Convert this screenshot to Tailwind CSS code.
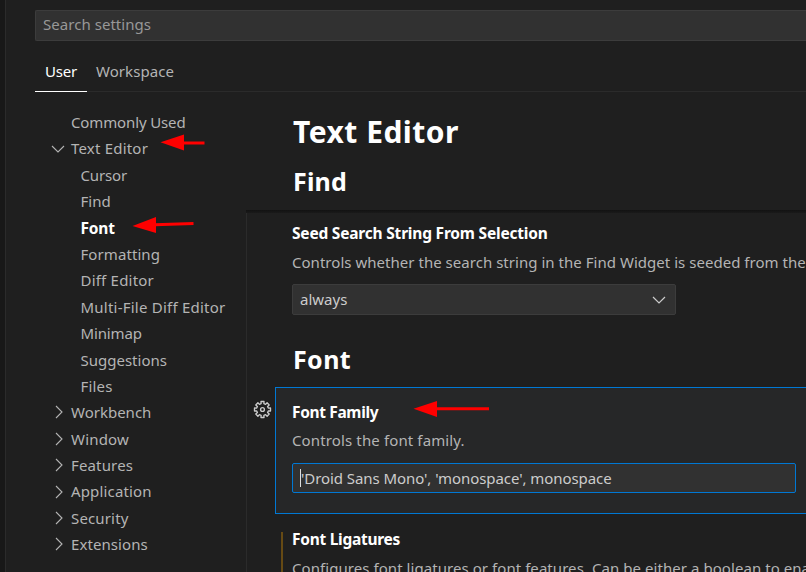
<!DOCTYPE html>
<html lang="en">
<head>
<meta charset="utf-8">
<title>Settings</title>
<script src="https://cdn.jsdelivr.net/npm/@tailwindcss/browser@4"></script>
</head>
<body class="relative flex h-[572px] w-[806px] overflow-hidden bg-[#1f1f1f] font-['Noto_Sans',sans-serif] text-[15px] text-[#b4b4b4] whitespace-nowrap">
<div class="w-[6px] shrink-0 border-r border-[#2b2b2b] bg-[#181818]"></div>
<main class="flex min-w-0 flex-1 flex-col">
  <header class="shrink-0 pl-[29px]">
    <div class="mt-[10px] flex h-[31px] items-center rounded-l-[2px] border border-r-0 border-[#3c3c3c] bg-[#313131] pl-[7px] pb-[2px] text-[#989898] tracking-[0.04px]">Search settings</div>
    <nav class="mt-[11px] flex h-[40px] border-b border-[#2b2b2b]">
      <div class="mb-[-1px] flex w-[52px] items-center justify-center border-b border-white text-white tracking-[-0.2px]">User</div>
      <div class="ml-[9px] flex items-center tracking-[0.06px]">Workspace</div>
    </nav>
  </header>
  <div class="flex min-h-0 flex-1">
    <aside class="flex w-[240px] shrink-0 flex-col pt-[17px] *:flex *:h-[26.4px] *:shrink-0 *:items-center">
      <div class="pl-[65px] tracking-[-0.13px]">Commonly Used</div>
      <div class="gap-[6px] pl-[45px] tracking-[0.2px]"><svg class="mt-[2px] h-[14px] w-[14px]" viewBox="0 0 14 14" fill="none" stroke="#b4b4b4" stroke-width="1.1"><path d="M1 3l6 6 6-6"/></svg>Text Editor</div>
      <div class="pl-[74.5px] tracking-[-0.15px]">Cursor</div>
      <div class="pl-[74.5px]">Find</div>
      <div class="pl-[74.5px] pt-px text-[15.5px] font-bold tracking-[-0.2px] text-white">Font</div>
      <div class="pl-[74.5px] tracking-[0.08px]">Formatting</div>
      <div class="pl-[74.5px] tracking-[0.21px]">Diff Editor</div>
      <div class="pl-[74.5px] tracking-[0.23px]">Multi-File Diff Editor</div>
      <div class="pl-[74.5px] tracking-[-0.15px]">Minimap</div>
      <div class="pl-[74.5px] pt-px">Suggestions</div>
      <div class="pl-[74.5px] tracking-[0.17px]">Files</div>
      <div class="gap-[6px] pl-[45px]"><svg class="h-[14px] w-[14px]" viewBox="0 0 14 14" fill="none" stroke="#b4b4b4" stroke-width="1.1"><path d="M5 1l6 6-6 6"/></svg>Workbench</div>
      <div class="gap-[6px] pl-[45px] tracking-[0.18px]"><svg class="h-[14px] w-[14px]" viewBox="0 0 14 14" fill="none" stroke="#b4b4b4" stroke-width="1.1"><path d="M5 1l6 6-6 6"/></svg>Window</div>
      <div class="gap-[6px] pl-[45px] tracking-[0.15px]"><svg class="h-[14px] w-[14px]" viewBox="0 0 14 14" fill="none" stroke="#b4b4b4" stroke-width="1.1"><path d="M5 1l6 6-6 6"/></svg>Features</div>
      <div class="gap-[6px] pl-[45px] tracking-[0.15px]"><svg class="h-[14px] w-[14px]" viewBox="0 0 14 14" fill="none" stroke="#b4b4b4" stroke-width="1.1"><path d="M5 1l6 6-6 6"/></svg>Application</div>
      <div class="gap-[6px] pl-[45px] tracking-[0.15px]"><svg class="h-[14px] w-[14px]" viewBox="0 0 14 14" fill="none" stroke="#b4b4b4" stroke-width="1.1"><path d="M5 1l6 6-6 6"/></svg>Security</div>
      <div class="gap-[6px] pl-[45px] tracking-[0.08px]"><svg class="h-[14px] w-[14px]" viewBox="0 0 14 14" fill="none" stroke="#b4b4b4" stroke-width="1.1"><path d="M5 1l6 6-6 6"/></svg>Extensions</div>
    </aside>
    <section class="flex min-w-0 flex-1 flex-col overflow-hidden">
      <div class="h-[118px] shrink-0 pl-[47px] font-bold text-white">
        <h1 class="pt-[20px] text-[30px] leading-[40px] tracking-[0.49px]">Text Editor</h1>
        <h2 class="pt-[11px] text-[25px] leading-[36px] tracking-[0.18px]">Find</h2>
      </div>
      <div class="h-[3px] shrink-0 bg-linear-to-b from-[#121212] to-[#1a1a1a]"></div>
      <div class="flex flex-1 flex-col border-l border-[#2b2b2b]">
        <div class="h-[174px] shrink-0 pl-[45px]">
          <h3 class="pt-[10px] text-[15.5px] font-bold leading-[20px] tracking-[-0.2px] text-white">Seed Search String From Selection</h3>
          <p class="mt-[9px] leading-[20px] tracking-[0.03px]">Controls whether the search string in the Find Widget is seeded from the</p>
          <div class="mt-[12px] flex h-[31px] w-[384px] items-center justify-between rounded-[2px] border border-[#3c3c3c] bg-[#313131] pr-[9px] pl-[7px] text-[#cccccc]"><span class="pb-px">always</span><svg class="h-[14px] w-[14px]" viewBox="0 0 14 14" fill="none" stroke="#cccccc" stroke-width="1.2"><path d="M1 4l6 6 6-6"/></svg></div>
          <h2 class="mt-[26px] pl-px text-[25px] font-bold leading-[36px] tracking-[0.39px] text-white">Font</h2>
        </div>
        <div class="flex shrink-0">
          <div class="flex w-[28px] justify-end pr-[3.5px] pt-[13px]">
            <svg class="h-[19px] w-[19px]" viewBox="-9.500 -9.500 19 19" fill="none" stroke="#cccccc" stroke-width="1.35" stroke-linejoin="round"><path d="M-1.400-5.800L-1.500-8H1.500L1.400-5.800L3.100-5.100L4.600-6.700L6.700-4.600L5.100-3.100L5.800-1.400L8-1.500V1.500L5.800 1.400L5.100 3.100L6.700 4.600L4.600 6.700L3.100 5.100L1.400 5.800L1.500 8H-1.500L-1.400 5.800L-3.100 5.100L-4.600 6.700L-6.700 4.600L-5.100 3.100L-5.800 1.400L-8 1.500V-1.500L-5.800-1.400L-5.100-3.100L-6.700-4.600L-4.600-6.700L-3.100-5.100Z"/><circle r="1.900"/></svg>
          </div>
          <div class="h-[127px] flex-1 border border-r-0 border-[#0078d4] bg-[#262728] pl-[16px]">
            <h3 class="pt-[14px] text-[15.5px] font-bold leading-[20px] tracking-[-0.35px] text-white">Font Family</h3>
            <p class="mt-[8px] leading-[20px] tracking-[0.13px]">Controls the font family.</p>
            <div class="mt-[13px] flex h-[30px] w-[504px] items-center rounded-[2px] border border-[#0078d4] bg-[#313131] pl-[7px] text-[#cccccc] tracking-[-0.07px]"><i class="h-[18px] w-px bg-[#dddddd]"></i><span class="pt-px">'Droid Sans Mono', 'monospace', monospace</span></div>
          </div>
        </div>
        <div class="flex h-[58px] shrink-0 pt-[18px] pl-[34px]">
          <div class="w-[2px] shrink-0 bg-[#664a14]"></div>
          <div class="pl-[9px]">
            <h3 class="mt-[-3px] text-[15.5px] font-bold leading-[20px] tracking-[-0.27px] text-white">Font Ligatures</h3>
            <p class="mt-[9px] leading-[20px] tracking-[0.06px]">Configures font ligatures or font features. Can be either a boolean to enable</p>
          </div>
        </div>
      </div>
    </section>
  </div>
</main>
<svg class="absolute inset-0 h-[572px] w-[806px]" viewBox="0 0 806 572" fill="#ff0000" stroke="#ff0000">
  <path d="M160.500 142.300L184 134.500V150.500Z" stroke="none"/><path d="M183 143H204.500" stroke-width="3"/>
  <path d="M132.500 226L156 217V233Z" stroke="none"/><path d="M155 224.800L193.500 223.500" stroke-width="3"/>
  <path d="M413.500 408.800L437 401V417Z" stroke="none"/><path d="M436 408.800H489" stroke-width="3"/>
</svg>
</body>
</html>
